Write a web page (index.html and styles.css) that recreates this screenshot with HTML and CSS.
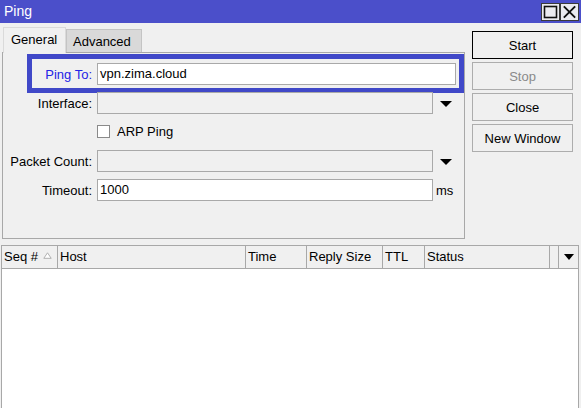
FILE: index.html
```html
<!DOCTYPE html>
<html>

<head>
	<meta charset="utf-8">
	<title>Ping</title>
	<link rel="stylesheet" href="styles.css">
</head>

<body>
	<div class="window">
		<header class="titlebar">
			<span class="title">Ping</span>
			<div class="winBtns">
				<span class="winBtn">
					<svg width="17" height="16" viewBox="0 0 17 16"><rect x="2.5" y="2.5" width="12" height="11" fill="none" stroke="#111" stroke-width="1.6"/></svg>
				</span>
				<span class="winBtn">
					<svg width="18" height="16" viewBox="0 0 18 16"><path d="M3 2 L15 14 M15 2 L3 14" stroke="#111" stroke-width="2"/></svg>
				</span>
			</div>
		</header>

		<div class="top">
			<div class="left">
				<div class="tabs">
					<div class="tab active">General</div>
					<div class="tab">Advanced</div>
				</div>
				<div class="panel">
					<div class="highlight">
						<label class="lbl blue">Ping To:</label>
						<div class="field wide">vpn.zima.cloud</div>
					</div>
					<div class="row first">
						<label class="lbl">Interface:</label>
						<div class="field off"></div>
						<span class="arrow"></span>
					</div>
					<div class="checkRow">
						<span class="box"></span>
						<span>ARP Ping</span>
					</div>
					<div class="row packet">
						<label class="lbl">Packet Count:</label>
						<div class="field off"></div>
						<span class="arrow"></span>
					</div>
					<div class="row timeout">
						<label class="lbl">Timeout:</label>
						<div class="field">1000</div>
						<span class="unit">ms</span>
					</div>
				</div>
			</div>

			<div class="buttons">
				<button class="btn default">Start</button>
				<button class="btn disabled">Stop</button>
				<button class="btn">Close</button>
				<button class="btn">New Window</button>
			</div>
		</div>

		<div class="table">
			<div class="thead">
				<div class="th c-seq">Seq #
					<svg class="sort" width="9" height="7" viewBox="0 0 9 7"><path d="M4.5 0.8 L8.2 6.3 L0.8 6.3 Z" fill="#fff" stroke="#b0b0b0" stroke-width="1"/></svg>
				</div>
				<div class="th c-host">Host</div>
				<div class="th c-time">Time</div>
				<div class="th c-size">Reply Size</div>
				<div class="th c-ttl">TTL</div>
				<div class="th c-status">Status</div>
				<div class="th c-blank"></div>
				<div class="th c-menu"><span class="arrow small"></span></div>
			</div>
			<div class="tbody"></div>
		</div>
	</div>
</body>

</html>
```

FILE: styles.css
```css
body {
	margin: 0;
	background-color: #f0f0f0;
	font-family: "Liberation Sans", Arial, sans-serif;
	font-size: 13px;
	color: #000;
}

.window {
	width: 581px;
	height: 408px;
	overflow: hidden;
}

.titlebar {
	height: 23px;
	background-color: #4b4fca;
	display: flex;
	align-items: center;
	justify-content: space-between;
}

.title {
	color: #fff;
	font-size: 14px;
	padding-left: 4px;
	padding-bottom: 1px;
}

.winBtns {
	display: flex;
	margin-right: 2px;
	margin-top: 1px;
}

.winBtn {
	width: 19px;
	height: 18px;
	box-sizing: border-box;
	border: 1px solid #3a3a3a;
	background-color: #ebebf0;
	display: flex;
	align-items: center;
	justify-content: center;
}

.top {
	display: flex;
	padding-left: 2px;
}

.left {
	width: 463px;
}

.tabs {
	display: flex;
	height: 25px;
	margin-top: 4px;
	padding-left: 1px;
}

.tab {
	box-sizing: border-box;
	border: 1px solid #c4c4c4;
	border-bottom: none;
	background-color: #d9d9d9;
	height: 23px;
	margin-top: 2px;
	width: 76px;
	padding-left: 6px;
	line-height: 23px;
}

.tab.active {
	position: relative;
	z-index: 1;
	background-color: #f0f0f0;
	border-color: #dadada;
	height: 26px;
	margin-top: 0;
	width: 63px;
	padding-left: 7px;
	line-height: 24px;
}

.panel {
	box-sizing: border-box;
	width: 463px;
	border: 1px solid #a8a8a8;
	padding-top: 1px;
	padding-bottom: 37px;
}

.highlight {
	margin-left: 24px;
	width: 437px;
	height: 39px;
	box-sizing: border-box;
	border: 5px solid #4048c8;
	display: flex;
	align-items: center;
	padding-top: 1px;
}

.lbl {
	width: 89px;
	text-align: right;
	margin-right: 5px;
	white-space: nowrap;
}

.highlight .lbl {
	width: 60px;
}

.blue {
	color: #2323e6;
}

.row {
	display: flex;
	align-items: center;
}

.row.first {
	margin-top: -1px;
}

.row.packet {
	margin-top: 12px;
}

.row.timeout {
	margin-top: 7px;
}

.field {
	box-sizing: border-box;
	width: 336px;
	height: 22px;
	border: 1px solid #a9a9a9;
	background-color: #fff;
	padding-left: 2px;
	line-height: 20px;
}

.field.wide {
	width: 359px;
}

.field.off {
	background-color: #f0f0f0;
}

.arrow {
	width: 0;
	height: 0;
	border-left: 6px solid transparent;
	border-right: 6px solid transparent;
	border-top: 6px solid #000;
	margin-left: 7px;
	margin-top: 2px;
}

.arrow.small {
	border-left-width: 5px;
	border-right-width: 5px;
	margin: 0;
}

.unit {
	margin-left: 3px;
}

.checkRow {
	display: flex;
	align-items: center;
	margin-top: 11px;
	padding-left: 94px;
	height: 13px;
}

.box {
	width: 13px;
	height: 13px;
	box-sizing: border-box;
	border: 1px solid #8a8a8a;
	background-color: #fff;
	margin-right: 7px;
}

.buttons {
	display: flex;
	flex-direction: column;
	gap: 3px;
	margin-left: 7px;
	margin-top: 8px;
}

.btn {
	width: 101px;
	height: 28px;
	box-sizing: border-box;
	border: 1px solid #adadad;
	background-color: #f0f0f0;
	font-family: "Liberation Sans", Arial, sans-serif;
	font-size: 13px;
	color: #000;
	padding: 0;
}

.btn.default {
	border-color: #000;
}

.btn.disabled {
	color: #8a8a8a;
}

.table {
	margin-top: 6px;
	margin-left: 1px;
	width: 578px;
	box-sizing: border-box;
	border: 1px solid #a8a8a8;
	border-bottom: none;
}

.thead {
	display: flex;
	height: 22px;
	border-bottom: 1px solid #a8a8a8;
	background-color: #f0f0f0;
}

.th {
	box-sizing: border-box;
	border-right: 1px solid #a8a8a8;
	padding-left: 2px;
	line-height: 22px;
	white-space: nowrap;
	display: flex;
	align-items: center;
}

.c-seq { width: 56px; }
.c-host { width: 188px; }
.c-time { width: 61px; }
.c-size { width: 76px; }
.c-ttl { width: 42px; }
.c-status { width: 125px; }
.c-blank { width: 9px; }

.c-menu {
	width: 18px;
	border-right: none;
	justify-content: center;
	padding-left: 1px;
}

.sort {
	margin-left: 5px;
	margin-bottom: 3px;
}

.tbody {
	height: 150px;
	background-color: #fff;
}
```
